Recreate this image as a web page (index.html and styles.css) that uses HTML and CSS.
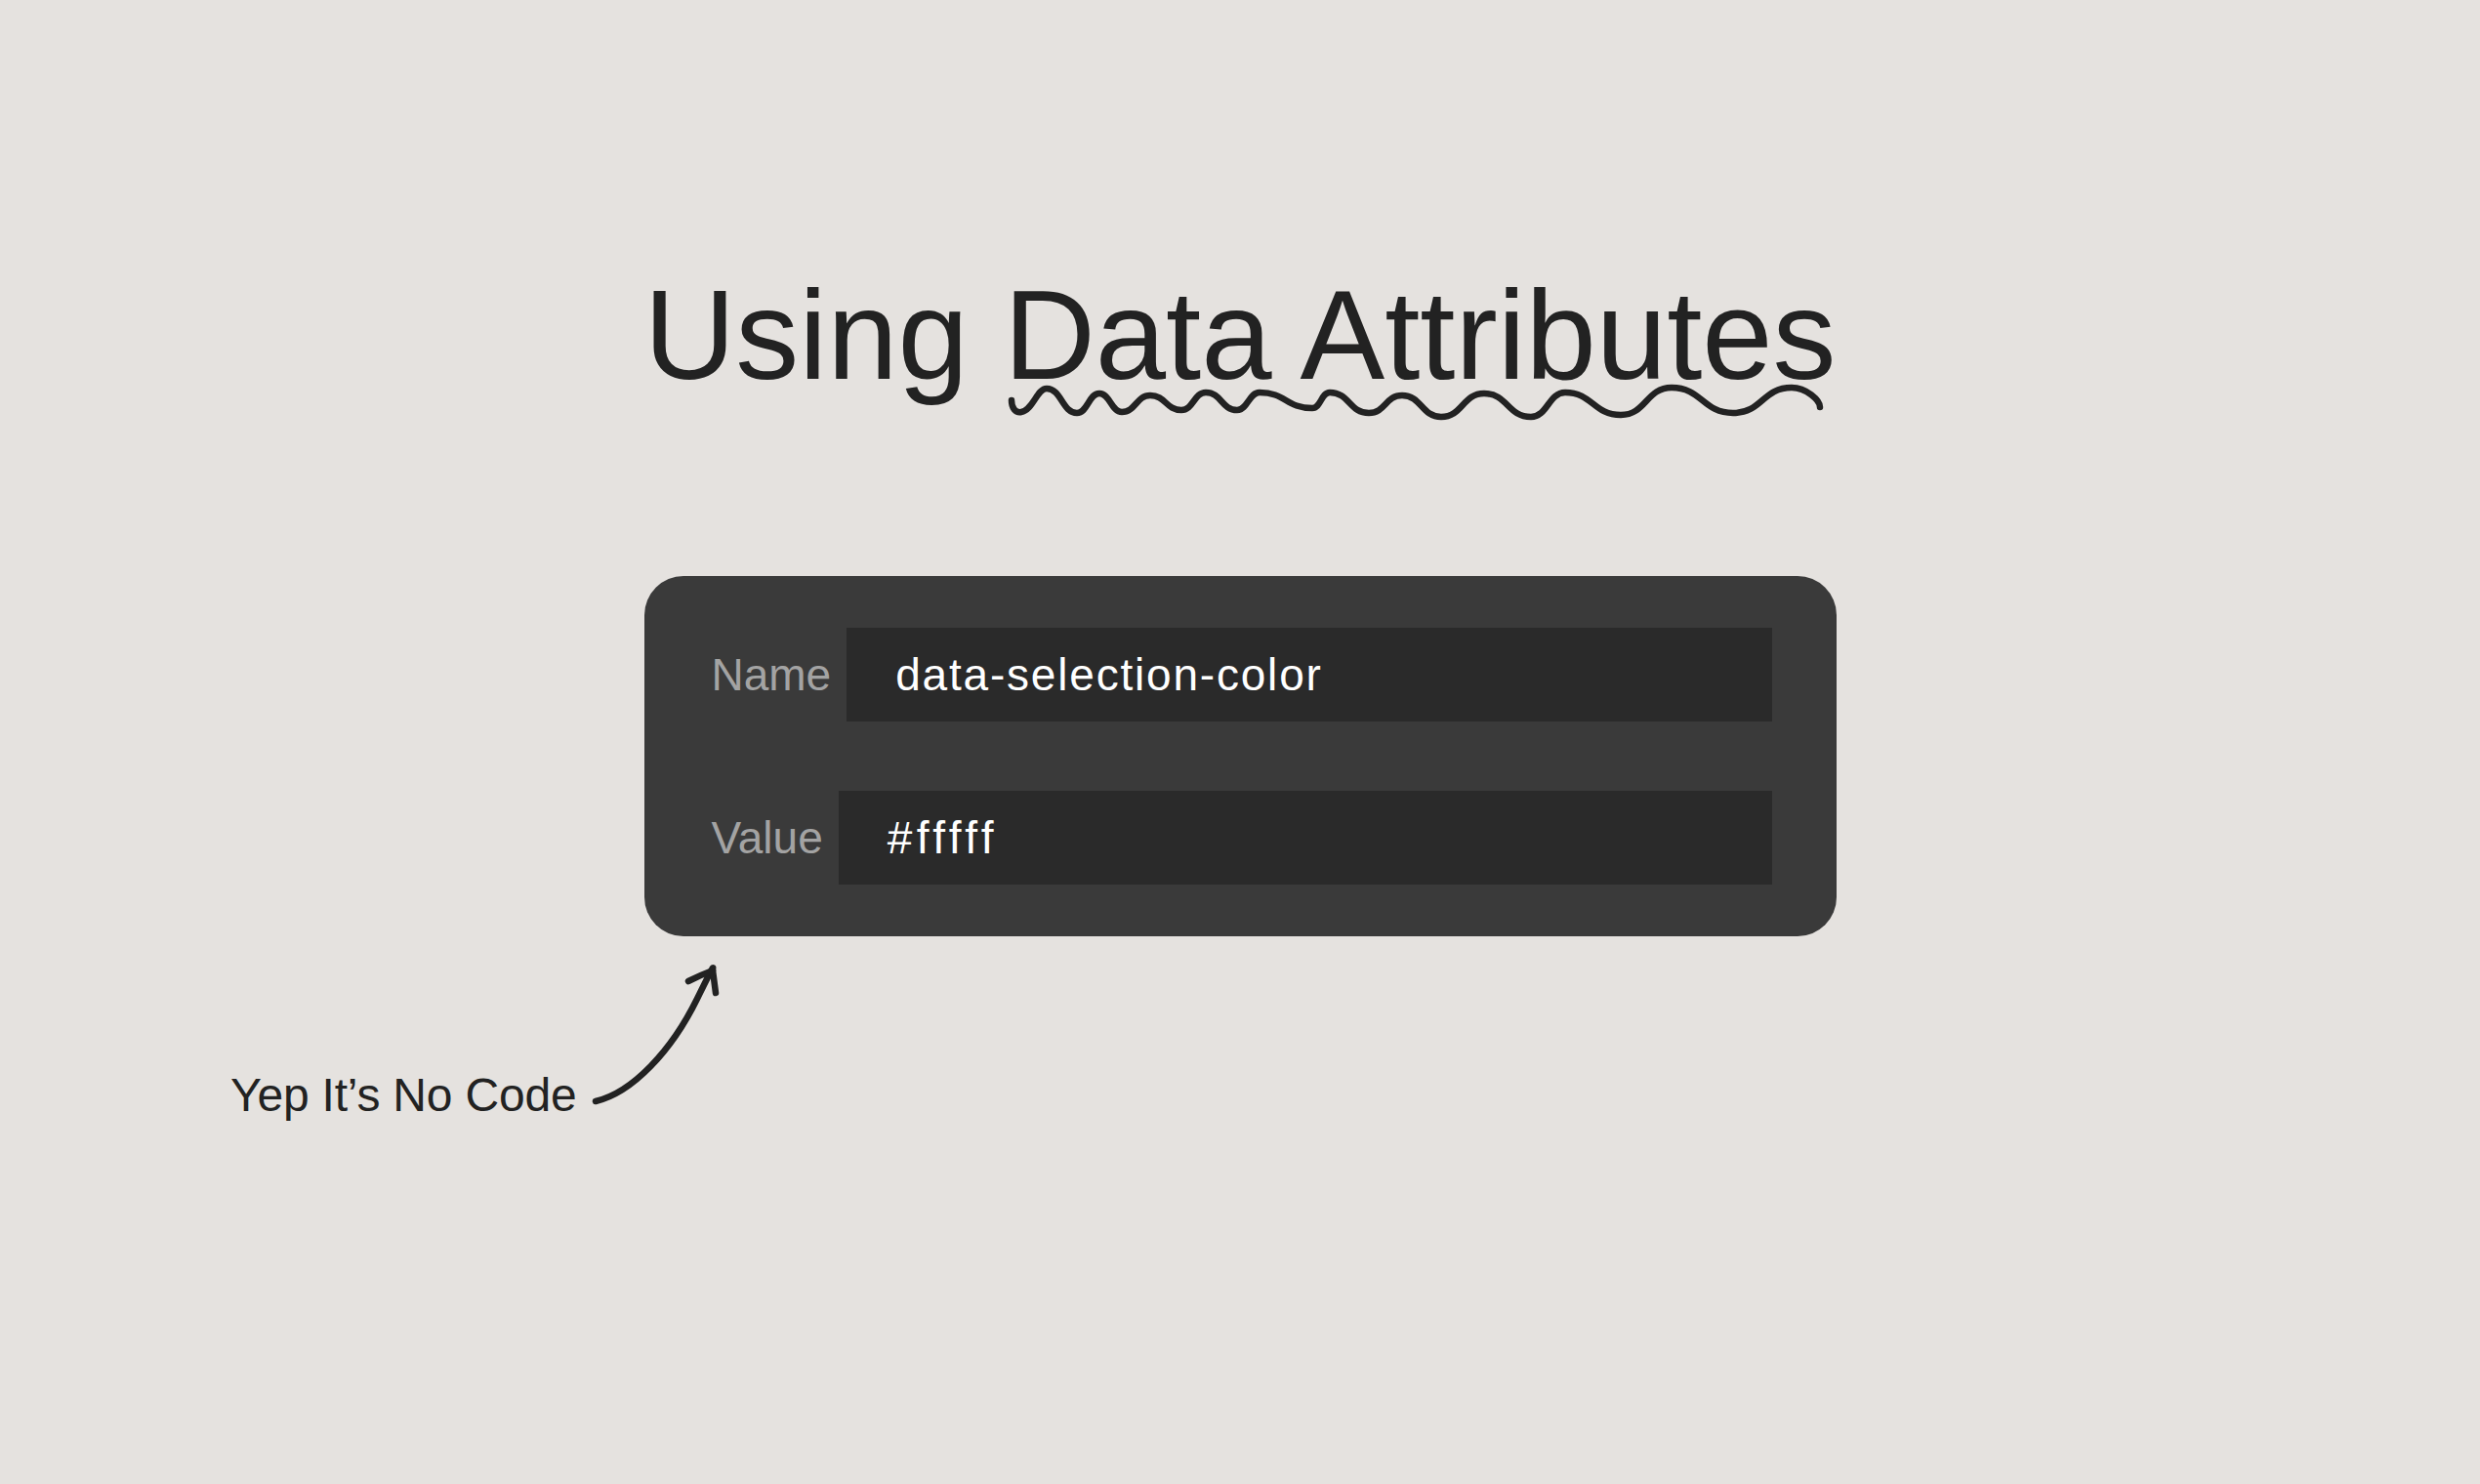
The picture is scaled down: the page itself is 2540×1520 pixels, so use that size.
FILE: index.html
```html
<!DOCTYPE html>
<html lang="en">
<head>
  <meta charset="UTF-8">
  <title>Using Data Attributes</title>
  <link rel="stylesheet" href="styles.css">
</head>
<body>

<!-- HEADING -->
<h1 class="title">
  Using Data Attributes
  <svg class="squiggle" viewBox="1030 390 840 45" width="840" height="45">
    <path d="M1036 410 C1036 418, 1040 423, 1046 422 C1058 420, 1062 398, 1072 398 C1087 398, 1088 423, 1103 423 C1114 423, 1115 403, 1126 403 C1137 403, 1138 422, 1149 422 C1163 422, 1164 405, 1178 405 C1194 405, 1194 420, 1210 420 C1222 420, 1223 402, 1235 402 C1251 402, 1251 420, 1267 420 C1278 420, 1279 402, 1290 402 C1317 402, 1317 418, 1344 418 C1353 418, 1353 402, 1362 402 C1382 402, 1382 423, 1402 423 C1419 423, 1419 405, 1436 405 C1456 405, 1456 427, 1476 427 C1498 427, 1498 403, 1520 403 C1544 403, 1544 427, 1568 427 C1585 427, 1586 402, 1603 402 C1631 402, 1632 425, 1660 425 C1686 425, 1686 397, 1712 397 C1743 397, 1744 423, 1775 423 C1805 423, 1805 397, 1835 397 C1850 397, 1864 410, 1864 417"/>
  </svg>
</h1>

<!-- ATTRIBUTE PANEL -->
<div class="panel">
  <div class="field">
    <span class="label">Name</span>
    <div class="input">data-selection-color</div>
  </div>
  <div class="field">
    <span class="label">Value</span>
    <div class="input input-wide">#fffff</div>
  </div>
</div>

<!-- NOTE -->
<div class="note">
  <span class="note-text">Yep It’s No Code</span>
  <svg class="arrow" viewBox="600 985 160 160" width="160" height="160">
    <path d="M612 1127 C650 1118, 690 1075, 716 1022 S728 1000, 732 993"/>
    <path d="M707 1004 C715 1000, 724 996, 732 993 L735 1016"/>
  </svg>
</div>

</body>
</html>
```

FILE: styles.css
```css
body {
  margin: 0;
  height: 1520px;
  font-family: "Liberation Sans", Arial, sans-serif;
  background-color: #e5e2df;
  color: #222222;
}

.title {
  position: relative;
  margin: 0;
  padding-top: 278px;
  font-size: 130px;
  font-weight: normal;
  line-height: 1;
  text-align: center;
}

.squiggle {
  position: absolute;
  left: calc(50% - 240px);
  top: 390px;
}

.squiggle path,
.arrow path {
  fill: none;
  stroke: #222222;
  stroke-width: 6.5;
  stroke-linecap: round;
  stroke-linejoin: round;
}

.panel {
  width: 1221px;
  box-sizing: border-box;
  margin: 182px auto 0;
  padding: 53px 66px 53px 69px;
  background-color: #3a3a3a;
  border-radius: 40px;
  display: flex;
  flex-direction: column;
  gap: 71px;
}

.field {
  display: flex;
  align-items: center;
  gap: 16px;
}

.label {
  font-size: 46px;
  color: #a3a3a3;
}

.input {
  flex: 1;
  height: 96px;
  box-sizing: border-box;
  padding-left: 50px;
  display: flex;
  align-items: center;
  background-color: #2a2a2a;
  color: #ffffff;
  font-size: 46px;
  letter-spacing: 1.8px;
}

.input-wide {
  letter-spacing: 4.5px;
}

.note {
  display: flex;
  align-items: flex-end;
  margin-top: 27px;
  padding-left: 236px;
}

.note-text {
  font-size: 48px;
  line-height: 1;
  letter-spacing: -0.2px;
}

.arrow {
  margin-left: 8px;
}
```
